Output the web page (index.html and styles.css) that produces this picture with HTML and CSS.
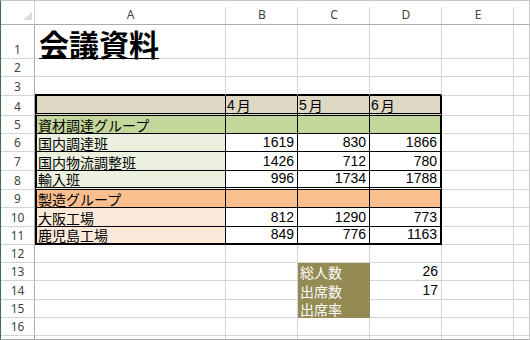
FILE: index.html
```html
<!DOCTYPE html>
<html lang="ja">
<head>
<meta charset="utf-8">
<title>会議資料</title>
<link rel="stylesheet" href="styles.css">
</head>
<body>
<div class="frame">
  <div class="sheet">
    <div class="corner"></div>
    <div class="ch">A</div><div class="ch">B</div><div class="ch">C</div><div class="ch">D</div><div class="ch">E</div><div class="ch chf"></div>

    <div class="rh">1</div>
    <div class="c title-cell"><span class="title">会議資料</span></div><div class="c"></div><div class="c"></div><div class="c"></div><div class="c"></div><div class="c f"></div>

    <div class="rh">2</div>
    <div class="c"></div><div class="c"></div><div class="c"></div><div class="c"></div><div class="c"></div><div class="c f"></div>

    <div class="rh">3</div>
    <div class="c tt"></div><div class="c tt"></div><div class="c tt"></div><div class="c tt"></div><div class="c"></div><div class="c f"></div>

    <div class="rh">4</div>
    <div class="c t tl dbl tan"></div><div class="c t dbl tan"><span class="d">4</span>月</div><div class="c t dbl tan"><span class="d">5</span>月</div><div class="c t tr dbl tan"><span class="d">6</span>月</div><div class="c"></div><div class="c f"></div>

    <div class="rh">5</div>
    <div class="c t tl green">資材調達グループ</div><div class="c t green"></div><div class="c t green"></div><div class="c t tr green"></div><div class="c"></div><div class="c f"></div>

    <div class="rh">6</div>
    <div class="c t tl lgreen">国内調達班</div><div class="c t num">1619</div><div class="c t num">830</div><div class="c t tr num">1866</div><div class="c"></div><div class="c f"></div>

    <div class="rh">7</div>
    <div class="c t tl lgreen">国内物流調整班</div><div class="c t num">1426</div><div class="c t num">712</div><div class="c t tr num">780</div><div class="c"></div><div class="c f"></div>

    <div class="rh">8</div>
    <div class="c t tl dbl lgreen">輸入班</div><div class="c t dbl num">996</div><div class="c t dbl num">1734</div><div class="c t tr dbl num">1788</div><div class="c"></div><div class="c f"></div>

    <div class="rh">9</div>
    <div class="c t tl orange">製造グループ</div><div class="c t orange"></div><div class="c t orange"></div><div class="c t tr orange"></div><div class="c"></div><div class="c f"></div>

    <div class="rh">10</div>
    <div class="c t tl lorange">大阪工場</div><div class="c t num">812</div><div class="c t num">1290</div><div class="c t tr num">773</div><div class="c"></div><div class="c f"></div>

    <div class="rh">11</div>
    <div class="c t tl tb lorange">鹿児島工場</div><div class="c t tb num">849</div><div class="c t tb num">776</div><div class="c t tr tb num">1163</div><div class="c"></div><div class="c f"></div>

    <div class="rh">12</div>
    <div class="c"></div><div class="c"></div><div class="c"></div><div class="c"></div><div class="c"></div><div class="c f"></div>

    <div class="rh">13</div>
    <div class="c"></div><div class="c"></div><div class="c olive">総人数</div><div class="c num">26</div><div class="c"></div><div class="c f"></div>

    <div class="rh">14</div>
    <div class="c"></div><div class="c"></div><div class="c olive">出席数</div><div class="c num">17</div><div class="c"></div><div class="c f"></div>

    <div class="rh">15</div>
    <div class="c"></div><div class="c"></div><div class="c olive">出席率</div><div class="c"></div><div class="c"></div><div class="c f"></div>

    <div class="rh">16</div>
    <div class="c"></div><div class="c"></div><div class="c"></div><div class="c"></div><div class="c"></div><div class="c f"></div>

    <div class="rh rhe"></div>
    <div class="c ce"></div><div class="c ce"></div><div class="c ce"></div><div class="c ce"></div><div class="c ce"></div><div class="c ce f"></div>
  </div>
</div>
</body>
</html>
```

FILE: styles.css
```css
* {
  box-sizing: border-box;
  margin: 0;
  padding: 0;
}

html,
body {
  background: #ffffff;
}

body {
  width: 530px;
  height: 340px;
  overflow: hidden;
  font-family: "Noto Sans CJK JP", sans-serif;
}

.frame {
  width: 530px;
  height: 340px;
  border-top: 1px solid #c6c6c6;
  border-left: 1px solid #3f6f51;
  border-right: 1px solid #c6c6c6;
  border-bottom: 1px solid #ababab;
}

.sheet {
  display: grid;
  grid-template-columns: 34px 191px 72px 72px 72px 72px 15px;
  grid-template-rows: 24px 34px 18px 19px 20px 18px 18px 19px 19px 18px 19px 18px 18px 18px 19px 18px 18px 3px;
}

.corner {
  border-right: 1px solid #d4d4d4;
  border-bottom: 1px solid #ababab;
  background: linear-gradient(to bottom right, transparent 50%, #dcdcdc 50%) right 2px bottom 4px / 9px 9px no-repeat;
}

.ch {
  border-bottom: 1px solid #ababab;
  background: linear-gradient(#d4d4d4, #d4d4d4) right bottom / 1px 17px no-repeat;
  font-family: "Noto Sans", sans-serif;
  font-size: 12px;
  line-height: 12px;
  color: #444444;
  display: flex;
  justify-content: center;
  align-items: center;
  padding-top: 4px;
}

.chf {
  background: none;
}

.rh {
  border-right: 1px solid #ababab;
  border-bottom: 1px solid #d4d4d4;
  font-family: "Noto Sans", sans-serif;
  font-size: 12px;
  line-height: 12px;
  color: #444444;
  display: flex;
  justify-content: center;
  align-items: flex-end;
  padding-bottom: 2px;
}

.c {
  border-right: 1px solid #d4d4d4;
  border-bottom: 1px solid #d4d4d4;
  display: flex;
  align-items: flex-end;
  font-size: 14px;
  line-height: 14px;
  padding: 0 3px 1px 3px;
  white-space: nowrap;
  color: #000000;
  overflow: visible;
}

.f {
  border-right: none;
}

.rhe,
.ce {
  border-bottom: none;
}

.num {
  justify-content: flex-end;
  padding-bottom: 2px;
  font-family: "Liberation Sans", sans-serif;
}

.d {
  font-family: "Liberation Sans", sans-serif;
  margin-right: 2px;
}

.title-cell {
  padding: 0 0 0 4px;
}

.title {
  font-size: 30px;
  line-height: 30px;
  font-weight: 700;
  text-decoration: underline;
  text-decoration-thickness: 1px;
  text-underline-offset: 2px;
}

.tt {
  border-bottom: 2px solid #000000;
}

.t {
  border-right: 1px solid #000000;
  border-bottom: 1px solid #000000;
  padding-left: 1px;
}

.tl {
  border-left: 2px solid #000000;
  padding-left: 1px;
}

.tr {
  border-right: 2px solid #000000;
}

.dbl {
  border-bottom: 3px double #000000;
}

.tb {
  border-bottom: 2px solid #000000;
}

.tan {
  background: #ddd9c4;
}

.green {
  background: #c4d79b;
}

.lgreen {
  background: #ebf1de;
}

.orange {
  background: #fabf8f;
}

.lorange {
  background: #fde9d9;
}

.olive {
  background: #948a54;
  color: #ffffff;
  border-right-color: #948a54;
  border-bottom-color: #948a54;
  padding-left: 2px;
}
```
